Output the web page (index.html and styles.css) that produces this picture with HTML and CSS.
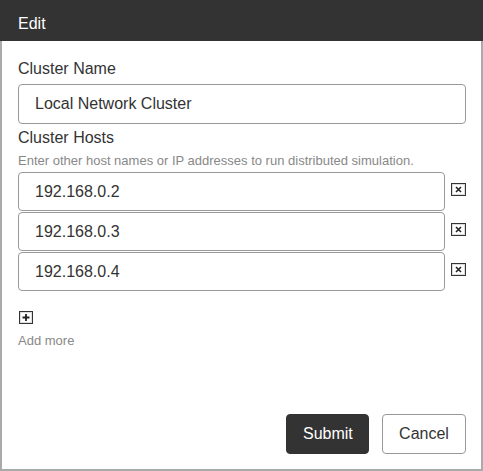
FILE: index.html
```html
<!DOCTYPE html>
<html>
<head>
<meta charset="utf-8">
<link rel="stylesheet" href="styles.css">
</head>
<body>
<div class="dialog">
  <div class="title">Edit</div>
  <div class="body">
    <div class="label">Cluster Name</div>
    <div class="input main">Local Network Cluster</div>
    <div class="label hosts-label">Cluster Hosts</div>
    <div class="help">Enter other host names or IP addresses to run distributed simulation.</div>
    <div class="hosts">
      <div class="host-row">
        <div class="input host">192.168.0.2</div>
        <svg class="xicon" width="15" height="13" viewBox="0 0 15 13"><rect x="0.5" y="0.5" width="14" height="12" fill="#fff" stroke="#333"/><rect x="1.5" y="1.5" width="12" height="10" fill="none" stroke="#ddd"/><path d="M5 4 L10 9 M10 4 L5 9" stroke="#222" stroke-width="1.6"/></svg>
      </div>
      <div class="host-row">
        <div class="input host">192.168.0.3</div>
        <svg class="xicon" width="15" height="13" viewBox="0 0 15 13"><rect x="0.5" y="0.5" width="14" height="12" fill="#fff" stroke="#333"/><rect x="1.5" y="1.5" width="12" height="10" fill="none" stroke="#ddd"/><path d="M5 4 L10 9 M10 4 L5 9" stroke="#222" stroke-width="1.6"/></svg>
      </div>
      <div class="host-row">
        <div class="input host">192.168.0.4</div>
        <svg class="xicon" width="15" height="13" viewBox="0 0 15 13"><rect x="0.5" y="0.5" width="14" height="12" fill="#fff" stroke="#333"/><rect x="1.5" y="1.5" width="12" height="10" fill="none" stroke="#ddd"/><path d="M5 4 L10 9 M10 4 L5 9" stroke="#222" stroke-width="1.6"/></svg>
      </div>
    </div>
    <svg class="plus" width="14" height="13" viewBox="0 0 14 13"><rect x="0.5" y="0.5" width="13" height="12" fill="#fff" stroke="#333"/><rect x="1.5" y="1.5" width="11" height="10" fill="none" stroke="#ddd"/><path d="M7 3 V10 M3.5 6.5 H10.5" stroke="#222" stroke-width="1.8"/></svg>
    <div class="addmore">Add more</div>
    <div class="actions">
      <div class="btn submit">Submit</div>
      <div class="btn cancel">Cancel</div>
    </div>
  </div>
</div>
</body>
</html>
```
FILE: styles.css
```css
html, body {
  margin: 0;
  padding: 0;
  background: #fff;
}
body {
  font-family: "Liberation Sans", Arial, sans-serif;
  color: #333;
}
.dialog {
  width: 483px;
  height: 471px;
  display: flex;
  flex-direction: column;
}
.title {
  height: 41px;
  flex: none;
  background: #333;
  color: #fff;
  font-size: 16px;
  line-height: 18px;
  padding: 15px 0 0 18px;
  box-sizing: border-box;
}
.body {
  flex: 1;
  display: flex;
  flex-direction: column;
  border: 2px solid #aaa;
  border-top: none;
  padding: 19px 15px 15px 16px;
}
.label {
  font-size: 16px;
  line-height: 18px;
  color: #333;
}
.input {
  box-sizing: border-box;
  border: 1px solid #999;
  border-radius: 4px;
  font-size: 16px;
  line-height: 18px;
  padding: 10px 16px;
  color: #333;
}
.main {
  margin-top: 6px;
  height: 40px;
}
.hosts-label {
  margin-top: 5px;
}
.help {
  font-size: 13px;
  line-height: 15px;
  color: #888;
  margin-top: 6px;
}
.hosts {
  margin-top: 4px;
  display: flex;
  flex-direction: column;
  gap: 1px;
}
.host-row {
  display: flex;
  align-items: flex-start;
  gap: 6px;
}
.host {
  width: 427px;
  height: 39px;
  padding-top: 10px;
}
.xicon {
  margin-top: 11px;
  flex: none;
}
.plus {
  margin-top: 20px;
  margin-left: 1px;
  display: block;
}
.addmore {
  font-size: 13px;
  line-height: 15px;
  color: #888;
  margin-top: 9px;
}
.actions {
  margin-top: auto;
  display: flex;
  justify-content: flex-end;
  gap: 13px;
}
.btn {
  box-sizing: border-box;
  height: 40px;
  font-size: 16px;
  line-height: 18px;
  padding: 10px 16px;
  border-radius: 4px;
  text-align: center;
}
.submit {
  width: 83px;
  background: #333;
  color: #fff;
  border: 1px solid #333;
}
.cancel {
  width: 84px;
  background: #fff;
  color: #333;
  border: 1px solid #999;
}
```
